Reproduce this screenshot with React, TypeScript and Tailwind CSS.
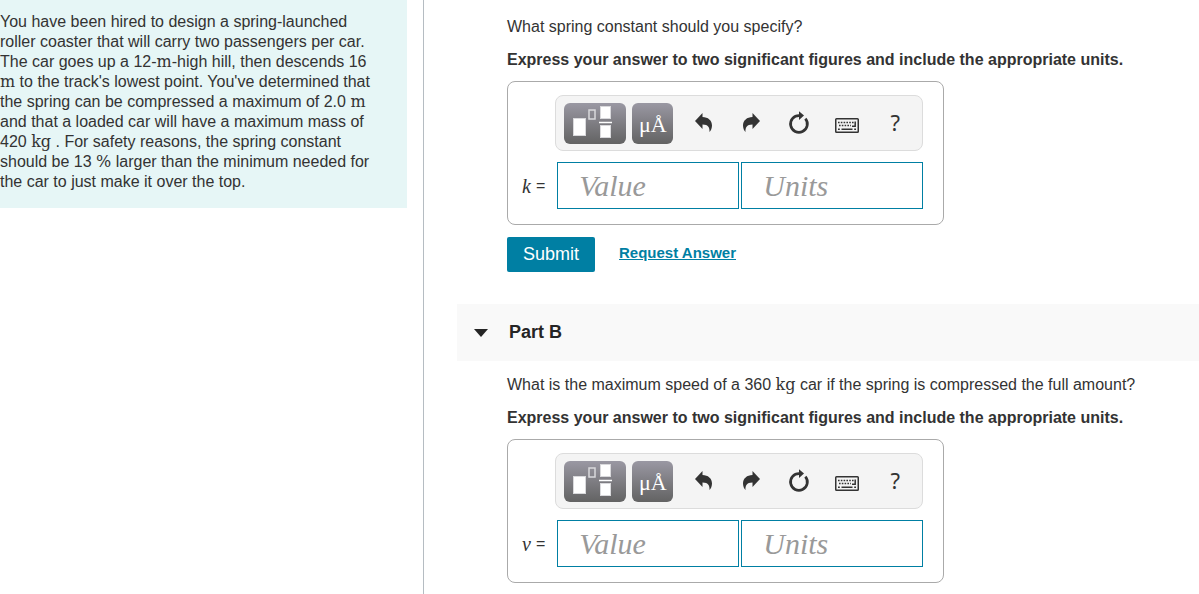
import type { ReactNode } from 'react';

type Question = {
  id: string;
  variable: string;
  prompt: ReactNode;
};

const questions: Record<'a' | 'b', Question> = {
  a: {
    id: 'part-a',
    variable: 'k',
    prompt: 'What spring constant should you specify?',
  },
  b: {
    id: 'part-b',
    variable: 'v',
    prompt: (
      <>
        What is the maximum speed of a 360 <Unit>kg</Unit> car if the spring is compressed the full amount?
      </>
    ),
  },
};

function Unit({ children }: { children: ReactNode }) {
  return (
    <span className="font-['DejaVu_Serif',serif] text-[16px] leading-none">{children}</span>
  );
}

function TemplateIcon() {
  return (
    <svg width="62" height="41" viewBox="0 0 62 41" fill="none" aria-hidden="true">
      <rect x="9.5" y="15.5" width="12" height="17" fill="#fff" stroke="#d9d9dc" />
      <rect x="25" y="7" width="6" height="9" stroke="#d9d9dc" strokeWidth="1.5" />
      <rect x="36.5" y="3.5" width="10" height="12" fill="#fff" stroke="#d9d9dc" />
      <path d="M35 19.5h13" stroke="#fff" strokeWidth="1.5" />
      <rect x="36.5" y="22.5" width="10" height="12" fill="#fff" stroke="#d9d9dc" />
    </svg>
  );
}

function UndoIcon() {
  return (
    <svg width="17" height="20" viewBox="0 0 17 20" fill="#333" aria-hidden="true">
      <path d="M0 8 7.5 0v4C13 4 17 7.5 17 12.500c0 2.500-1 5-2.500 6.500.3-4-1-7.500-7-7.500V16z" />
    </svg>
  );
}

function RedoIcon() {
  return (
    <svg width="17" height="20" viewBox="0 0 17 20" fill="#333" aria-hidden="true">
      <path d="M17 8 9.5 0v4C4 4 0 7.5 0 12.500c0 2.500 1 5 2.500 6.500-.3-4 1-7.500 7-7.500V16z" />
    </svg>
  );
}

function ResetIcon() {
  return (
    <svg width="22" height="24" viewBox="0 0 22 24" fill="none" aria-hidden="true">
      <path d="M11.5 4.6A8.4 8.4 0 1 0 17.4 7.6" stroke="#333" strokeWidth="2.7" />
      <path d="M11 0.3 16 4.5 11 9z" fill="#333" />
    </svg>
  );
}

function KeyboardIcon() {
  return (
    <svg width="24" height="24" viewBox="0 -7 24 24" fill="none" aria-hidden="true">
      <rect x="0.75" y="0.75" width="22.5" height="13.5" rx="0.8" stroke="#333" strokeWidth="1.5" />
      <path d="M3 4.5h16M4 7.5h12" stroke="#333" strokeWidth="1.7" strokeDasharray="1.6 1.2" />
      <path d="M20.2 3.5v4.7H17" stroke="#333" strokeWidth="1.5" />
      <path d="M3 11.2h1.8M6.5 11.2h11M19.2 11.2H21" stroke="#333" strokeWidth="1.5" />
    </svg>
  );
}

const tools = [
  { label: 'Undo', icon: <UndoIcon /> },
  { label: 'Redo', icon: <RedoIcon /> },
  { label: 'Reset', icon: <ResetIcon /> },
  { label: 'Keyboard', icon: <KeyboardIcon /> },
];

function Toolbar() {
  return (
    <div className="flex h-14 items-center rounded-lg border border-[#dcdcdc] bg-[#f4f4f4] pl-2">
      <button
        type="button"
        aria-label="Templates"
        className="mr-1.5 rounded-md bg-linear-to-b from-[#9a98a3] to-[#636363]"
      >
        <TemplateIcon />
      </button>
      <button
        type="button"
        aria-label="Symbols"
        className="mr-1.5 h-[41px] w-[41px] rounded-md bg-linear-to-b from-[#9a98a3] to-[#636363] pt-1 font-['Liberation_Serif',serif] text-[22px] leading-8 text-white"
      >
        μÅ
      </button>
      {tools.map((tool) => (
        <button
          key={tool.label}
          type="button"
          aria-label={tool.label}
          className="flex h-6 w-12 items-center justify-center"
        >
          {tool.icon}
        </button>
      ))}
      <button
        type="button"
        aria-label="Help"
        className="w-12 pb-0.5 font-['Noto_Sans',sans-serif] text-[22px] leading-6 text-[#333]"
      >
        ?
      </button>
    </div>
  );
}

function AnswerBox({ id, variable }: { id: string; variable: string }) {
  const inputClass =
    "h-[47px] w-[182px] border border-[#007fa3] bg-white px-[21px] font-['Liberation_Serif',serif] text-[30px] text-[#333] italic outline-none placeholder:text-[#999] placeholder:opacity-100";

  return (
    <div className="mt-[11px] flex w-fit items-end rounded-lg border border-[#aaa] pt-[13px] pr-5 pb-[15px] pl-3.5">
      <label htmlFor={`${id}-value`} className="mr-2.5 flex h-[47px] items-center gap-[5px] whitespace-nowrap">
        <span className="font-['Liberation_Serif',serif] text-[20px] italic">{variable}</span>
        <span>=</span>
      </label>
      <div>
        <Toolbar />
        <div className="mt-[11px] ml-0.5 flex gap-0.5">
          <input id={`${id}-value`} type="text" placeholder="Value" className={inputClass} />
          <input type="text" placeholder="Units" aria-label="Units" className={inputClass} />
        </div>
      </div>
    </div>
  );
}

function Part({ question }: { question: Question }) {
  return (
    <div className="pl-[83px]">
      <p className="leading-5">{question.prompt}</p>
      <p className="mt-[13px] font-bold leading-5">
        Express your answer to two significant figures and include the appropriate units.
      </p>
      <AnswerBox id={question.id} variable={question.variable} />
    </div>
  );
}

export default function App() {
  return (
    <div className="grid min-h-screen grid-cols-[424fr_775fr] bg-white font-['Liberation_Sans',Arial,sans-serif] text-[16px] text-[#333]">
      <aside className="border-r border-[#b5bcc2] pr-4">
        <p className="bg-[#e6f6f6] pt-3 pr-6 pb-4 leading-5">
          You have been hired to design a spring-launched roller coaster that will carry two passengers per
          car. The car goes up a 12-<Unit>m</Unit>-high hill, then descends 16 <Unit>m</Unit> to the track's
          lowest point. You've determined that the spring can be compressed a maximum of 2.0 <Unit>m</Unit>{' '}
          and that a loaded car will have a maximum mass of 420 <Unit>kg</Unit> . For safety reasons, the
          spring constant should be 13 <Unit>%</Unit> larger than the minimum needed for the car to just make
          it over the top.
        </p>
      </aside>

      <main className="pt-[17px]">
        <Part question={questions.a} />

        <div className="mt-3 flex items-center gap-6 pl-[83px]">
          <button type="button" className="h-[35px] rounded-xs bg-[#007fa3] px-4 text-[18px] text-white">
            Submit
          </button>
          <a href="#request-answer" className="pb-1 text-[15px] leading-5 font-bold text-[#007fa3] underline">
            Request Answer
          </a>
        </div>

        <section className="mt-8">
          <div className="mb-3.5 ml-[33px] bg-[#f9f9f9]">
            <h2>
              <button
                type="button"
                aria-expanded="true"
                className="flex h-[57px] w-full items-center gap-[21px] pl-[17px] text-[18px] font-bold text-[#252525]"
              >
                <svg width="14" height="8" viewBox="0 0 14 8" fill="#252525" aria-hidden="true">
                  <path d="M0 0h14L7 8z" />
                </svg>
                Part B
              </button>
            </h2>
          </div>
          <Part question={questions.b} />
        </section>
      </main>
    </div>
  );
}
